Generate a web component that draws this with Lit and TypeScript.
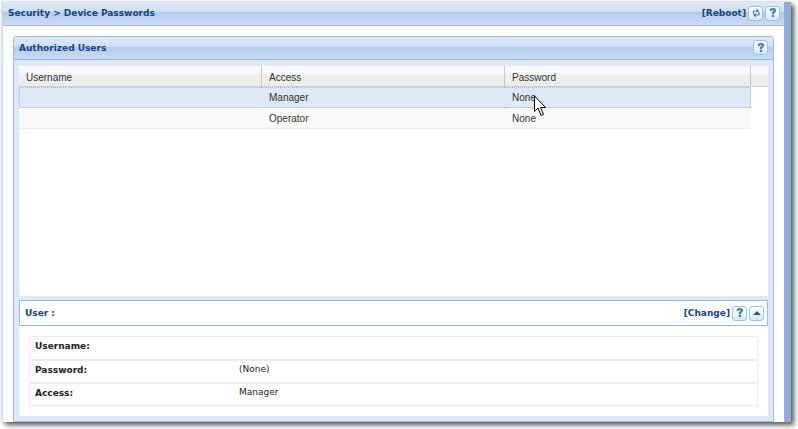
import { LitElement, html, svg, css } from "lit";
import { customElement, property } from "lit/decorators.js";

const icons: Record<string, unknown> = {
  help: svg`<path d="M3 4V2.200Q4 1 6 1Q9 1 9 3.500Q9 5 7 6.200V7H5V5.300Q6.800 4.400 6.800 3.600Q6.800 2.800 5.800 2.800Q4.800 2.800 4.600 4ZM5 8h2v2H5Z" fill="#4a7fb3" stroke="#4a7fb3" stroke-width=".3"/>`,
  refresh: svg`<path d="M3.500 7V4H7M9 5V8H5.500" fill="none" stroke="#4a7fb3" stroke-width="1.200"/>
    <path d="M6.500 1.500L9.500 4L6.500 6ZM6 6L3 8L6 10.500Z" fill="#4a7fb3"/>`,
  up: svg`<path d="M2 8L6 4L10 8Z" fill="#2351a3"/>`,
};

@customElement("tool-button")
class ToolButton extends LitElement {
  @property() icon = "help";
  @property() label = "";
  static styles = css`
    :host { display: block; }
    button {
      display: grid; place-items: center; width: 15px; height: 15px; padding: 0;
      border: 1px solid #9cc0ea; border-radius: 3px;
      background: linear-gradient(#fff, #f3f9fe 45%, #d3e6f8);
      cursor: pointer;
    }
    svg { display: block; width: 12px; height: 12px; }
  `;
  render() {
    return html`<button type="button" aria-label=${this.label} title=${this.label}>
      <svg viewBox="0 0 12 12" aria-hidden="true">${icons[this.icon]}</svg>
    </button>`;
  }
}

@customElement("app-root")
class AppRoot extends LitElement {
  users = [
    { name: "", access: "Manager", password: "None" },
    { name: "", access: "Operator", password: "None" },
  ];

  static styles = css`
    :host {
      display: flex; box-sizing: border-box; min-height: 100vh;
      padding: 2px 7px 7px 2px; background: #fff;
      font: 9px/12px "DejaVu Sans", Verdana, sans-serif;
      color: #222;
    }
    * { box-sizing: border-box; }
    h1, h2, h3, dl, dd, dt { margin: 0; font-size: inherit; }
    .window {
      flex: 1; display: flex; flex-direction: column; min-width: 0;
      border-left: 1px solid #c9dbf0; border-right: 7px solid #8eadd9;
      background: #fff;
      box-shadow: 3px 3px 5px #555, 0 0 2px #ccc;
    }
    .bar {
      display: flex; align-items: center; gap: 2px;
      height: 24px; padding: 0 4px 1px 5px;
      border-bottom: 1px solid #99bbe8;
      background: linear-gradient(#dfe9f7, #cfdff3 44%, #adc7ea 44%, #b5cdec 50%, #cbdcf3);
      color: #15428b; font-weight: bold;
    }
    .bar h1, .bar h2, .bar h3 { flex: 1; }
    .action {
      padding: 0; border: 0; background: none; font: inherit; color: inherit; cursor: pointer;
    }
    .panel {
      flex: 1; display: flex; flex-direction: column;
      margin: 10px 10px 0; border: 1px solid #99bbe8; border-radius: 3px 3px 0 0;
    }
    .panel > .bar { height: 23px; padding-right: 5px; }
    .frame {
      flex: 1; display: flex; flex-direction: column;
      padding: 6px 5px 5px; background: #dfe8f6;
    }
    .grid {
      flex: 1; padding-right: 17px;
      background: linear-gradient(#fafafa, #f7f7f7 40%, #f1f1f1 40%, #ebebeb) 0 0 / 100% 20px no-repeat,
        linear-gradient(#d0d0d0, #d0d0d0) 0 20px / 100% 1px no-repeat, #fff;
    }
    .users {
      width: 100%; table-layout: fixed; border-collapse: separate; border-spacing: 0;
      font: 10px/12px "Liberation Sans", Arial, sans-serif; color: #333;
    }
    .users th, .users td { height: 21px; padding: 2px 7px 0; text-align: left; font-weight: normal; }
    .users th { border-right: 1px solid #c9c9c9; }
    .third { width: 33.2%; }
    .users td { background: #fafafa; border-bottom: 1px solid #ededed; }
    .users .selected td {
      padding-top: 1px;
      background: #dfe8f6; border-top: 1px dotted #a3bae9; border-bottom: 1px dotted #a3bae9;
    }
    .users .selected td:first-child { border-left: 1px dotted #a3bae9; padding-left: 6px; }
    .users .selected td:last-child { border-right: 1px dotted #a3bae9; }
    .target { position: relative; }
    .pointer { position: absolute; left: 22px; top: 3px; width: 13px; height: 22px; z-index: 1; }
    .split { height: 4px; background: #dfe8f6; }
    .details { background: #fff; }
    .details .bar {
      height: 26px; padding: 0 3px 0 5px; border: 1px solid #99bbe8; background: #fff;
    }
    .fields { margin: 10px; border: 1px solid #ebebeb; }
    .field { display: flex; height: 22px; padding: 2px 5px; line-height: 14px; }
    .field + .field { height: 23px; border-top: 2px solid #ebebeb; }
    .field dt { width: 204px; font-weight: bold; }
    .field dd { line-height: 12px; }
  `;

  render() {
    return html`
      <main class="window">
        <header class="bar">
          <h1>Security &gt; Device Passwords</h1>
          <button class="action" type="button">[Reboot]</button>
          <tool-button icon="refresh" label="Refresh"></tool-button>
          <tool-button label="Help"></tool-button>
        </header>
        <section class="panel">
          <div class="bar">
            <h2>Authorized Users</h2>
            <tool-button label="Help"></tool-button>
          </div>
          <div class="frame">
            <div class="grid">
              <table class="users">
                <thead>
                  <tr><th class="third">Username</th><th class="third">Access</th><th>Password</th></tr>
                </thead>
                <tbody>
                  ${this.users.map((u, i) => html`
                    <tr class=${i === 0 ? "selected" : ""}>
                      <td>${u.name}</td>
                      <td>${u.access}</td>
                      <td><span class="target">${u.password}${i === 0 ? this.pointer() : ""}</span></td>
                    </tr>`)}
                </tbody>
              </table>
            </div>
            <div class="split"></div>
            <section class="details">
              <div class="bar">
                <h3>User :</h3>
                <button class="action" type="button">[Change]</button>
                <tool-button label="Help"></tool-button>
                <tool-button icon="up" label="Collapse"></tool-button>
              </div>
              <dl class="fields">
                <div class="field"><dt>Username:</dt><dd></dd></div>
                <div class="field"><dt>Password:</dt><dd>(None)</dd></div>
                <div class="field"><dt>Access:</dt><dd>Manager</dd></div>
              </dl>
            </section>
          </div>
        </section>
      </main>`;
  }

  pointer() {
    return html`<svg class="pointer" viewBox="0 0 13 22" aria-hidden="true">
      <path d="M.5 1V16.500L4 13L7 20.500L9.500 19.500L6.500 12.500H11.500Z" fill="#fff" stroke="#000"/>
    </svg>`;
  }
}
